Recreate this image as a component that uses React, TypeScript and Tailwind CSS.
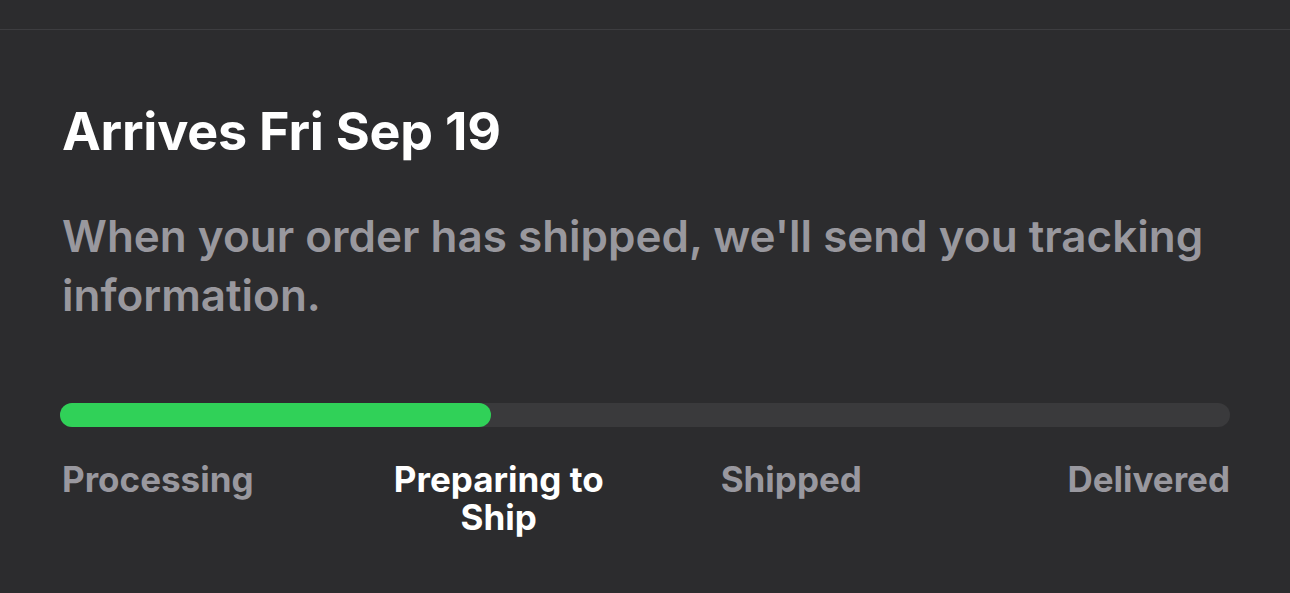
import React from "react";

const steps = ["Processing", "Preparing to Ship", "Shipped", "Delivered"];
const current = 1;

export default function App() {
  return (
    <div
      className="min-h-screen w-full bg-[#2c2c2e] text-white overflow-hidden"
      style={{ fontFamily: "Inter, 'Noto Sans', sans-serif" }}
    >
      {/* top separator */}
      <div className="h-[29px]" />
      <div className="h-px bg-[#3d3d40]" />

      <div className="px-[60px] pt-[71px]">
        <h1 className="text-[52px] leading-[62px] font-bold tracking-[-0.2px] pl-[2px]">
          Arrives Fri Sep 19
        </h1>

        <p className="mt-[44px] text-[44px] leading-[59px] font-semibold text-[#99989e] pl-[2px]">
          When your order has shipped, we'll send you tracking information.
        </p>

        {/* progress bar */}
        <div className="mt-[78px] h-[24px] w-full rounded-full bg-[#3a3a3c]">
          <div className="h-full w-[431px] rounded-full bg-[#30d158]" />
        </div>

        {/* steps */}
        <div className="mt-[33px] grid grid-cols-4 text-[35px] leading-[38px] font-bold">
          {steps.map((s, i) => (
            <div
              key={s}
              className={
                (i === 0
                  ? "text-left pl-[2px]"
                  : i === steps.length - 1
                  ? "text-right"
                  : "text-center px-4") +
                (i === current ? " text-white" : " text-[#99989f]")
              }
            >
              {s}
            </div>
          ))}
        </div>
      </div>
    </div>
  );
}
